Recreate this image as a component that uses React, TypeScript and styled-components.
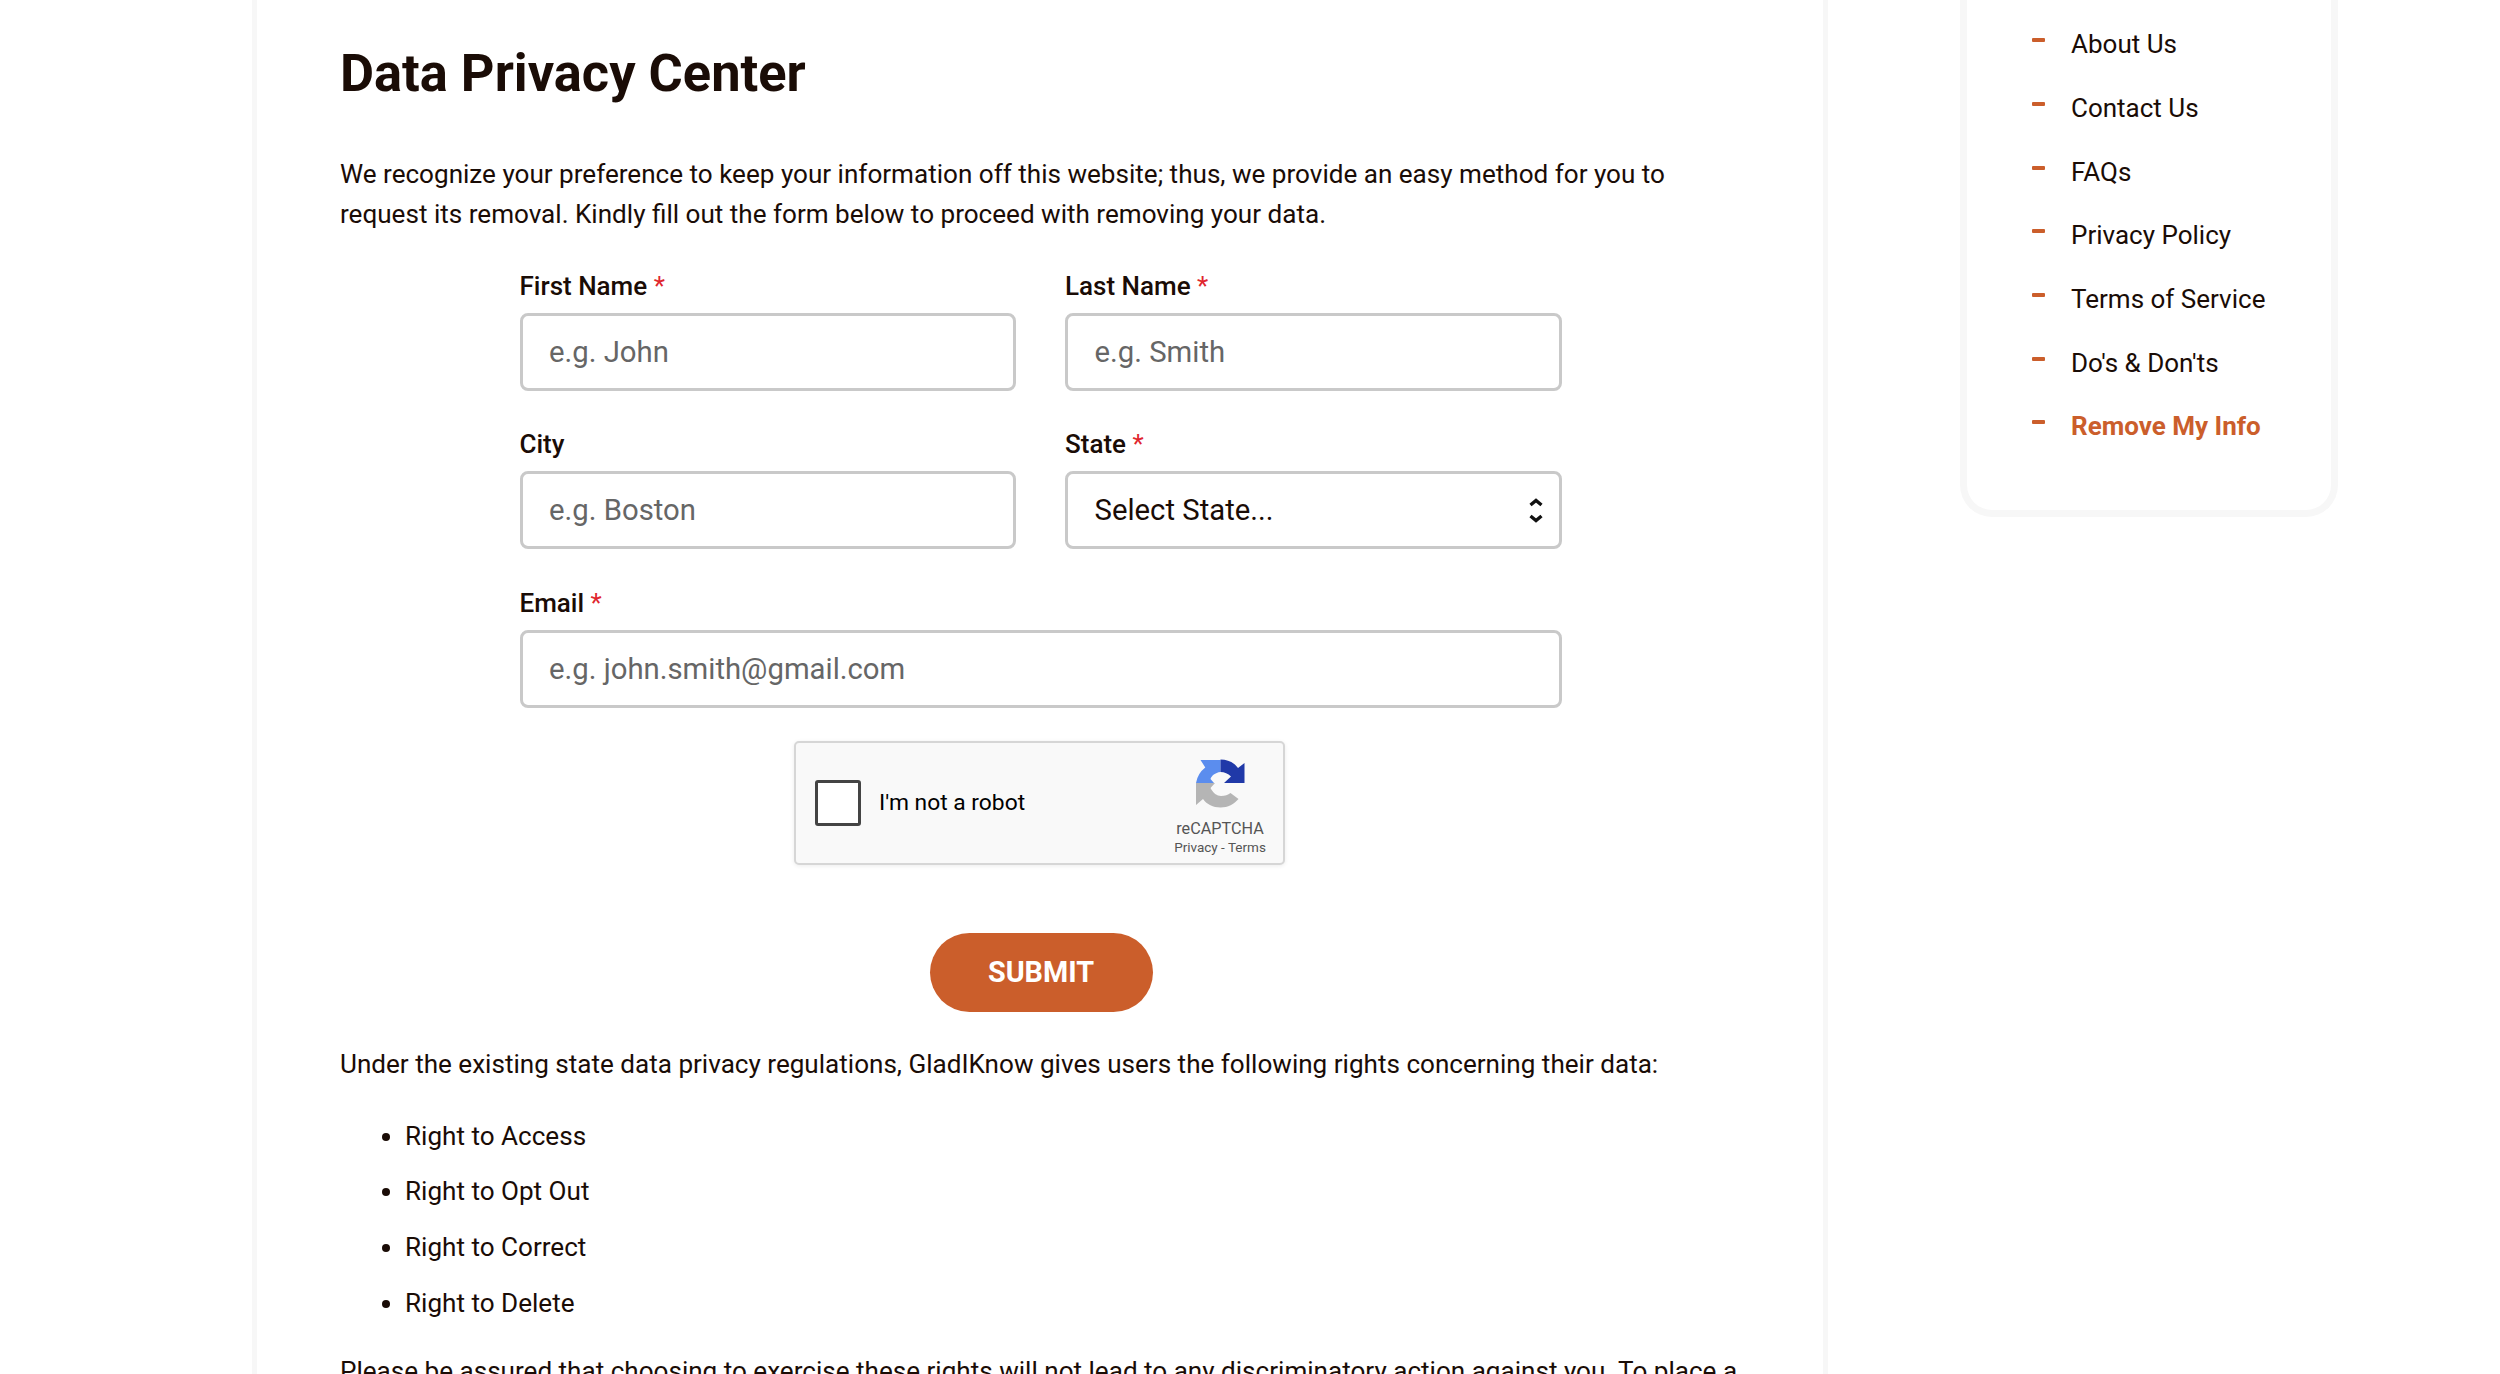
import React from "react";
import styled, { createGlobalStyle } from "styled-components";

const Global = createGlobalStyle`
  html, body { margin: 0; padding: 0; background: #fff; height: 1374px; overflow: hidden; }
  * { box-sizing: border-box; }
  body { font-family: Roboto, "Liberation Sans", sans-serif; color: #1a0c06; }
`;

const Page = styled.div`
  display: flex;
  align-items: flex-start;
  height: 1374px;
  overflow: hidden;
  padding-left: 252px;
`;

const Card = styled.main`
  width: 1576px;
  flex: none;
  height: 1374px;
  padding: 39px 84px 0 83px;
  border-left: 5px solid #f7f7f7;
  border-right: 5px solid #f7f7f7;
`;

const Title = styled.h1`
  margin: 0;
  font-size: 52.4px;
  line-height: 68px;
  font-weight: 700;
`;

const Text = styled.p`
  margin: 0;
  font-size: 26.08px;
  line-height: 40px;
  white-space: nowrap;
`;

const Intro = styled(Text)`
  margin-top: 47px;
`;

const Form = styled.form`
  width: 1042px;
  margin: 34px 0 0 179.5px;
  display: grid;
  grid-template-columns: 496.5px 496.5px;
  column-gap: 49px;
  row-gap: 35.4px;
`;

const Field = styled.div<{ $wide?: boolean }>`
  display: flex;
  flex-direction: column;
  grid-column: ${(p) => (p.$wide ? "1 / 3" : "auto")};
`;

const Label = styled.label`
  font-size: 26px;
  line-height: 36px;
  font-weight: 500;
  margin-bottom: 9px;
`;

const Req = styled.span`
  color: #e0262e;
  font-weight: 400;
`;

const Input = styled.input`
  height: 78px;
  width: 100%;
  border: 3.5px solid #c9c9c9;
  border-radius: 8px;
  padding: 0 26.5px;
  font: 400 29.3px Roboto, sans-serif;
  color: #1a0c06;
  background: #fff;
  outline: none;
  &::placeholder { color: #666; opacity: 1; }
`;

const SelectBox = styled.div`
  height: 78px;
  border: 3.5px solid #c9c9c9;
  border-radius: 8px;
  padding: 0 15px 0 26.5px;
  font-size: 29.3px;
  display: flex;
  align-items: center;
  justify-content: space-between;
`;

const CaptchaWrap = styled.div`
  display: flex;
  justify-content: center;
  margin-top: 33px;
`;

const Captcha = styled.div`
  width: 491px;
  height: 124px;
  display: flex;
  align-items: center;
  background: #f9f9f9;
  border: 2px solid #d6d6d6;
  border-radius: 5px;
  box-shadow: 0 1px 4px rgba(0, 0, 0, 0.08);
  padding: 0 15px 0 19px;
`;

const Check = styled.span`
  width: 46px;
  height: 46px;
  flex: none;
  background: #fff;
  border: 3.5px solid #444;
  border-radius: 3px;
`;

const CaptchaText = styled.span`
  font-size: 22.8px;
  margin-left: 18px;
  flex: 1;
  color: #000;
`;

const Brand = styled.div`
  width: 96px;
  margin-top: 10px;
  display: flex;
  flex-direction: column;
  align-items: center;
  color: #555;
`;

const BrandName = styled.span`
  font-size: 16.2px;
  line-height: 20px;
  margin-top: 11px;
`;

const BrandLinks = styled.span`
  font-size: 13.5px;
  line-height: 17px;
  white-space: nowrap;
`;

const SubmitWrap = styled.div`
  display: flex;
  justify-content: center;
  margin-top: 68px;
  padding-left: 3px;
`;

const Submit = styled.button`
  width: 223px;
  height: 79px;
  border: 0;
  border-radius: 40px;
  background: #cb5e2b;
  color: #fff;
  font: 700 28.8px Roboto, sans-serif;
`;

const Rights = styled(Text)`
  margin-top: 32px;
`;

const List = styled.ul`
  margin: 32px 0 0;
  padding: 0 0 0 65px;
`;

const Item = styled.li`
  font-size: 26.08px;
  line-height: 40px;
  margin-bottom: 15.6px;
`;

const Closing = styled(Text)`
  margin-top: 28px;
`;

const Side = styled.aside`
  width: 378px;
  flex: none;
  margin-left: 132px;
  height: 517px;
  padding: 12.5px 0 0 65px;
  border: 7px solid #f7f7f7;
  border-top: 0;
  border-radius: 0 0 32px 32px;
`;

const NavList = styled.ul`
  list-style: none;
  margin: 0;
  padding: 0;
`;

const NavItem = styled.li<{ $active?: boolean }>`
  display: flex;
  align-items: center;
  height: 63.7px;
  font-size: 26px;
  font-weight: ${(p) => (p.$active ? 700 : 400)};
  color: ${(p) => (p.$active ? "#cb5e2b" : "#1a0c06")};
`;

const Dash = styled.span`
  width: 13px;
  height: 4px;
  background: #cb5e2b;
  border-radius: 1px;
  margin: -8px 26px 0 0;
  flex: none;
`;

const Stepper = () => (
  <svg width="16" height="25" viewBox="0 0 16 25" fill="none" stroke="#111" strokeWidth="3.4">
    <path d="M2.5 7 L8 2.5 L13.5 7" />
    <path d="M2.5 18 L8 22.5 L13.5 18" />
  </svg>
);

const Logo = () => (
  <svg width="49" height="49" viewBox="0 0 49 49">
    <path d="M0 24 A24.5 24.5 0 0 1 9.3 8.5 L4.5 1 L24.5 1 L24.5 13 C19 13.5 15.5 17 14.5 20 L18 24 Z" fill="#5b8dee" />
    <path d="M24.5 0.5 C32 0.5 38 3.5 42 9 L48.5 4 L48.5 24 L28 24 L35 17.5 C32 14.5 28.5 13 24.5 13 Z" fill="#2039a8" />
    <path d="M0 24 L19 24 L14.5 29 C17 34 21 37 25 37 C29 37 32 36 34.5 34 L42.5 40 C38 45 32 48.5 24.5 48.5 C17 48.5 11 45.5 7 40 L0 46 Z" fill="#b5b5b5" />
  </svg>
);

const navLinks = ["About Us", "Contact Us", "FAQs", "Privacy Policy", "Terms of Service", "Do's & Don'ts"];
const rights = ["Right to Access", "Right to Opt Out", "Right to Correct", "Right to Delete"];

export default function App() {
  return (
    <>
      <Global />
      <Page>
        <Card>
          <Title>Data Privacy Center</Title>
          <Intro>
            We recognize your preference to keep your information off this website; thus, we provide an easy method for you to
            <br />
            request its removal. Kindly fill out the form below to proceed with removing your data.
          </Intro>
          <Form>
            <Field>
              <Label>First Name <Req>*</Req></Label>
              <Input placeholder="e.g. John" />
            </Field>
            <Field>
              <Label>Last Name <Req>*</Req></Label>
              <Input placeholder="e.g. Smith" />
            </Field>
            <Field>
              <Label>City</Label>
              <Input placeholder="e.g. Boston" />
            </Field>
            <Field>
              <Label>State <Req>*</Req></Label>
              <SelectBox>
                Select State...
                <Stepper />
              </SelectBox>
            </Field>
            <Field $wide>
              <Label>Email <Req>*</Req></Label>
              <Input placeholder="e.g. john.smith@gmail.com" />
            </Field>
          </Form>
          <CaptchaWrap>
            <Captcha>
              <Check />
              <CaptchaText>I'm not a robot</CaptchaText>
              <Brand>
                <Logo />
                <BrandName>reCAPTCHA</BrandName>
                <BrandLinks>Privacy - Terms</BrandLinks>
              </Brand>
            </Captcha>
          </CaptchaWrap>
          <SubmitWrap>
            <Submit type="button">SUBMIT</Submit>
          </SubmitWrap>
          <Rights>Under the existing state data privacy regulations, GladIKnow gives users the following rights concerning their data:</Rights>
          <List>
            {rights.map((r) => (
              <Item key={r}>{r}</Item>
            ))}
          </List>
          <Closing>Please be assured that choosing to exercise these rights will not lead to any discriminatory action against you. To place a</Closing>
        </Card>
        <Side>
          <NavList>
            {navLinks.map((n) => (
              <NavItem key={n}><Dash />{n}</NavItem>
            ))}
            <NavItem $active><Dash />Remove My Info</NavItem>
          </NavList>
        </Side>
      </Page>
    </>
  );
}
